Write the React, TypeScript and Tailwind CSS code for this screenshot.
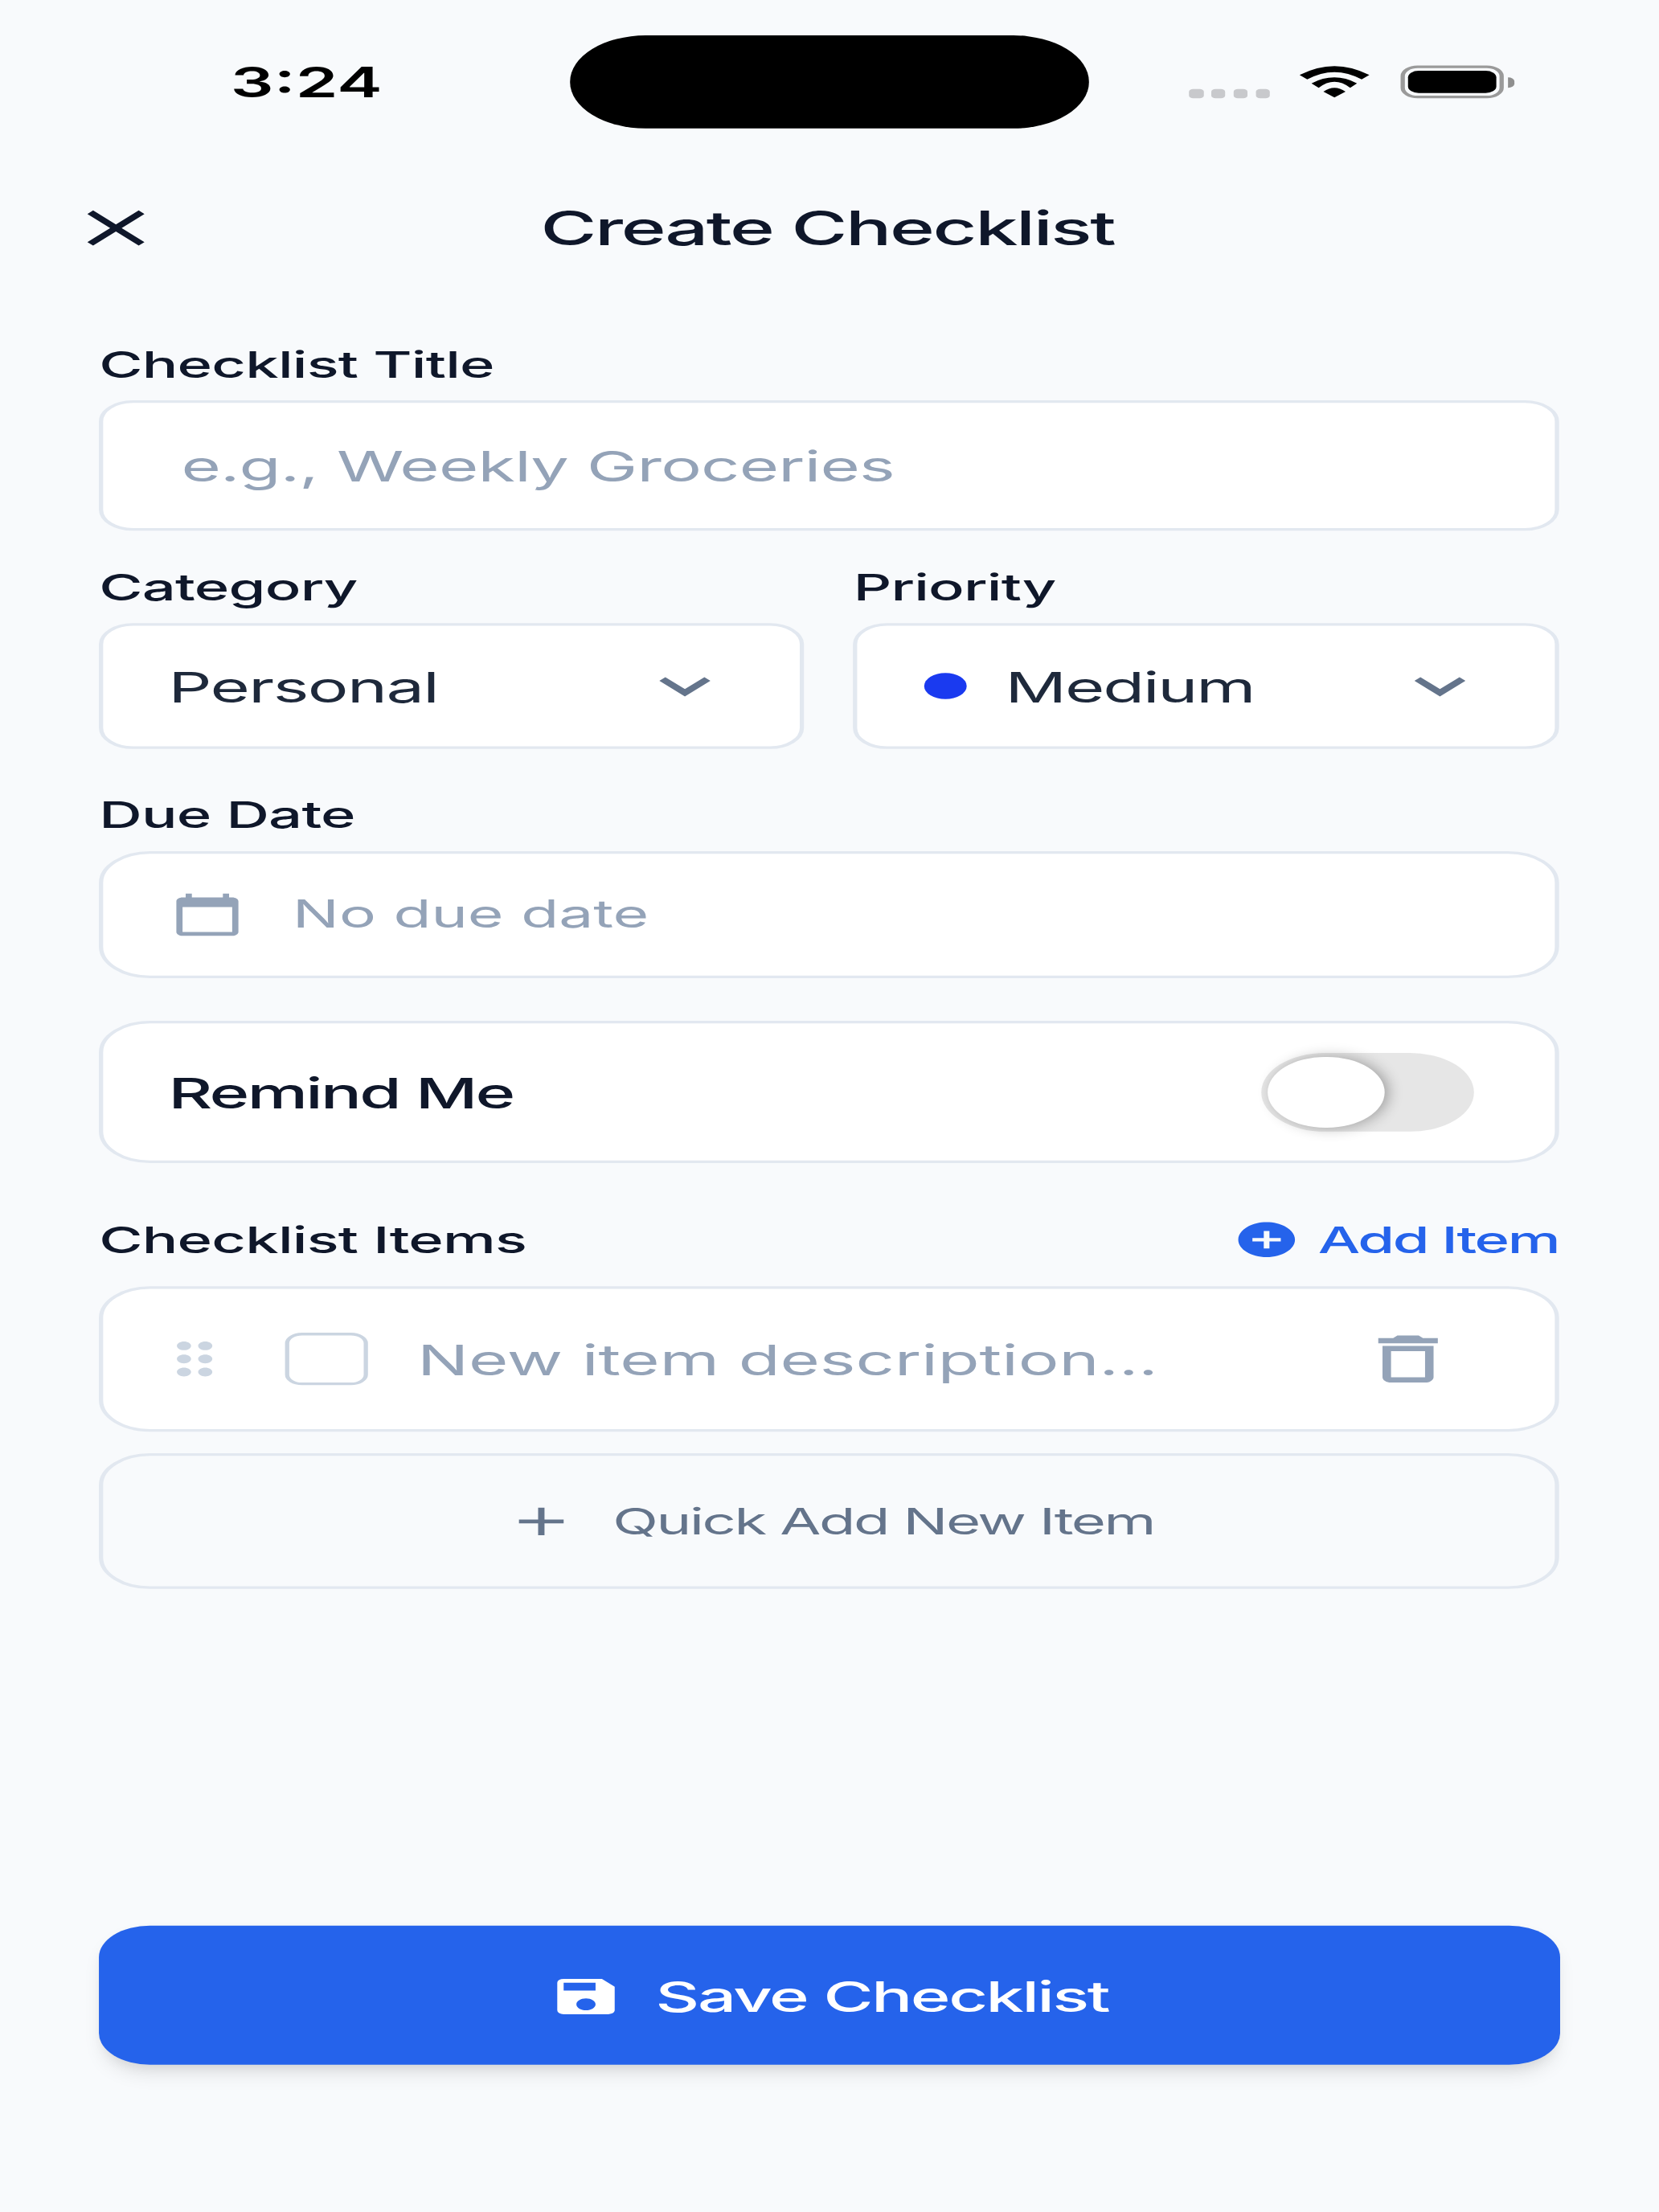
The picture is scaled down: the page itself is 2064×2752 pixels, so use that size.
import React from 'react';
import {
  MdAdd,
  MdAddCircle,
  MdCalendarToday,
  MdClose,
  MdDeleteOutline,
  MdDragIndicator,
  MdExpandMore,
  MdSave,
} from 'react-icons/md';

const Label: React.FC<{ children: React.ReactNode }> = ({ children }) => (
  <div className="text-sm font-[550] leading-5 tracking-[-0.15px] text-[#0f172a]">{children}</div>
);

const StatusBar: React.FC = () => (
  <div className="flex h-[62px] items-start pt-[13.5px]">
    <div className="w-[134px] pl-[54.2px] pt-[8px] text-base font-semibold leading-5 text-black">3:24</div>
    <div className="h-[35.5px] w-[122px] rounded-full bg-black" />
    <div className="flex h-[24px] flex-1 items-end pl-[23.6px]">
      <div className="mr-[7px] flex gap-[1.9px]">
        <span className="h-[3.4px] w-[3.3px] rounded-[1px] bg-[#c8c9cc]" />
        <span className="h-[3.4px] w-[3.3px] rounded-[1px] bg-[#c8c9cc]" />
        <span className="h-[3.4px] w-[3.3px] rounded-[1px] bg-[#c8c9cc]" />
        <span className="h-[3.4px] w-[3.3px] rounded-[1px] bg-[#c8c9cc]" />
      </div>
      <svg viewBox="0 0 16.4 12" className="h-[12.4px] w-[16.4px]" fill="#000">
        <path d="M0 3.4Q8.2-3.4 16.4 3.4L14.6 5.1Q8.2-.5 1.8 5.1Z" />
        <path d="M2.8 6.6Q8.2 2.1 13.5 6.6L11.9 8.3Q8.2 3.7 4.5 8.3Z" />
        <path d="M5.6 9.8Q8.2 6.8 10.8 9.8L8.2 12Z" />
      </svg>
      <div className="ml-[7.3px] flex h-[12.4px] w-[24.4px] items-center justify-center rounded-[4px] border border-[#9a9a9a]">
        <div className="h-[8.6px] w-[20.6px] rounded-[2.5px] bg-black" />
      </div>
      <div className="mb-[4px] ml-[1px] h-[4px] w-[1.4px] rounded-r-full bg-[#8f8f8f]" />
    </div>
  </div>
);

const App: React.FC = () => {
  return (
    <div className="h-[2752px] w-[2064px] overflow-hidden bg-[#f8fafc]">
      {/* the shot is a 390x844 screen stretched unevenly; zoom keeps fractional offsets from snapping */}
      <div className="origin-top-left scale-x-[1.3231] scale-y-[0.8152] font-['Inter',sans-serif]">
        <div className="h-[844px] w-[390px] [zoom:4]">
          <StatusBar />

          <div className="relative flex h-[50px] items-center justify-center pr-[1px]">
            <MdClose size={23} className="absolute left-[15.8px] top-[13.5px] text-[#0f172a]" />
            <h1 className="text-lg font-[550] tracking-[-0.45px] text-[#0f172a]">Create Checklist</h1>
          </div>

          <div className="pl-[23.3px] pr-[23.6px]">
            <div className="pt-[16.9px]">
              <Label>Checklist Title</Label>
              <div className="mt-[3.8px] flex h-[49.7px] items-center rounded-lg border border-[#e2e8f0] bg-white px-[18.3px] pt-[1px] text-base tracking-[-0.15px] text-[#94a3b8]">
                e.g., Weekly Groceries
              </div>
            </div>

            <div className="mt-[11.5px] grid grid-cols-2 gap-[11.5px]">
              <div>
                <Label>Category</Label>
                <div className="mt-[3.8px] flex h-[48px] items-center justify-between rounded-lg border border-[#e2e8f0] bg-white pl-[15.3px] pr-[15px] text-base tracking-[-0.3px] text-[#1e293b]">
                  <span className="pt-[1px]">Personal</span>
                  <MdExpandMore size={24} className="text-[#64748b]" />
                </div>
              </div>
              <div>
                <Label>Priority</Label>
                <div className="mt-[3.8px] flex h-[48px] items-center rounded-lg border border-[#e2e8f0] bg-white pl-[15.7px] pr-[15px] text-base tracking-[-0.4px] text-[#1e293b]">
                  <span className="mr-[9px] h-[10px] w-[10px] rounded-full bg-[#1a3af0]" />
                  <span className="flex-1 pt-[1px]">Medium</span>
                  <MdExpandMore size={24} className="text-[#64748b]" />
                </div>
              </div>
            </div>

            <div className="mt-[15.2px]">
              <Label>Due Date</Label>
              <div className="mt-[3.9px] flex h-[48.4px] items-center rounded-xl border border-[#e2e8f0] bg-white pl-[15.8px] text-[14.5px] text-[#94a3b8]">
                <MdCalendarToday size={17.5} className="mr-[11.2px] text-[#94a3b8]" />
                No due date
              </div>
            </div>

            <div className="mt-[16.3px] flex h-[54.3px] items-center justify-between rounded-xl border border-[#e2e8f0] bg-white pl-[15.3px] pr-[19px]">
              <span className="pt-[1px] text-base font-[550] tracking-[-0.5px] text-[#0f172a]">Remind Me</span>
              <div className="flex h-[30px] w-[50px] items-center rounded-full bg-[#e6e6e6] pl-[1.5px]">
                <div className="h-[27px] w-[27.5px] rounded-full bg-white shadow-[1px_0_4px_rgba(0,0,0,0.3)]" />
              </div>
            </div>

            <div className="mt-[19.2px] flex items-center justify-between">
              <Label>Checklist Items</Label>
              <div className="flex items-center gap-1 text-sm font-medium tracking-[-0.45px] text-[#2563eb]">
                <MdAddCircle size={16} />
                Add Item
              </div>
            </div>

            <div className="mt-[7.8px] flex h-[55.5px] items-center rounded-xl border border-[#e2e8f0] bg-white pl-[11.5px] pr-[22.5px]">
              <MdDragIndicator size={20} className="text-[#cbd5e1]" />
              <div className="ml-[11.3px] h-[20px] w-[19.5px] rounded-[4px] border border-[#cbd5e1]" />
              <span className="ml-[11.5px] flex-1 pt-[1px] text-base text-[#94a3b8]">New item description...</span>
              <MdDeleteOutline size={24} className="text-[#94a3b8]" />
            </div>

            <div className="mt-[8.2px] flex h-[51.8px] items-center justify-center gap-[7.7px] rounded-xl border border-[#e2e8f0] text-sm tracking-[-0.45px] text-[#64748b]">
              <MdAdd size={18} />
              Quick Add New Item
            </div>

            <button className="mt-[128.5px] flex h-[53px] w-[calc(100%+0.3px)] items-center justify-center gap-[7.3px] rounded-xl bg-[#2563eb] pr-[0.6px] pt-[1px] text-base font-medium tracking-[-0.45px] text-white shadow-md">
              <MdSave size={18} />
              Save Checklist
            </button>
          </div>
        </div>
      </div>
    </div>
  );
};

export default App;
